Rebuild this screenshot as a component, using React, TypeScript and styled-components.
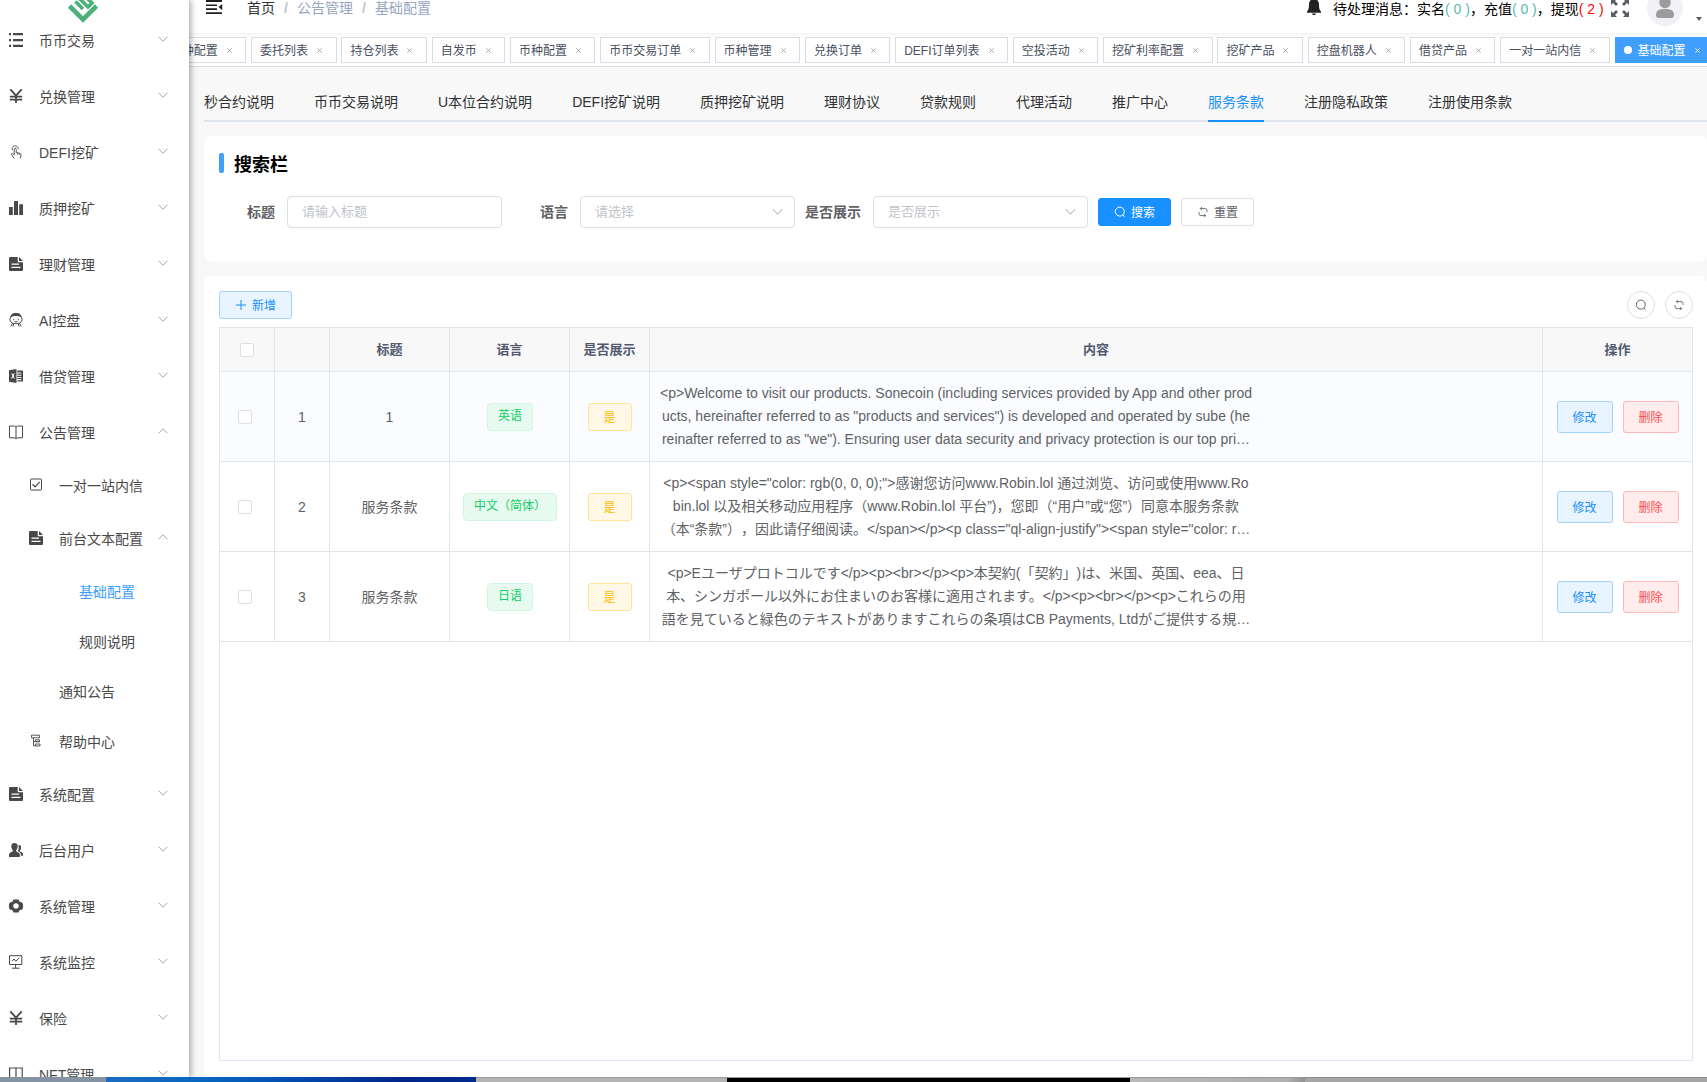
import React from "react";
import styled, { createGlobalStyle, css } from "styled-components";

const Global = createGlobalStyle`
  * { box-sizing: border-box; }
  html, body { margin: 0; padding: 0; }
  body {
    font-family: "Liberation Sans", "Noto Sans CJK SC", sans-serif;
    font-size: 14px;
    color: #303133;
    background: #fff;
    overflow: hidden;
  }
`;

const Screen = styled.div`
  width: 1707px;
  height: 1082px;
  display: flex;
  flex-direction: column;
  overflow: hidden;
`;
const Shell = styled.div`
  display: flex;
  height: 1077px;
  overflow: hidden;
`;

/* ---------- sidebar ---------- */
const Sidebar = styled.aside`
  position: relative;
  z-index: 5;
  flex: 0 0 189px;
  background: #fff;
  box-shadow: 2px 0 6px rgba(0, 21, 41, 0.35);
`;
const Brand = styled.div`
  height: 13px;
  padding-left: 67px;
  svg { display: block; overflow: visible; }
`;
const MenuRow = styled.div<{ $level: number; $leaf?: boolean; $active?: boolean }>`
  display: flex;
  align-items: center;
  height: ${(p) => (p.$leaf ? 50 : 56)}px;
  padding: 0 20px 0 ${(p) => 9 + p.$level * 20}px;
  color: ${(p) => (p.$active ? "#409eff" : "#484848")};
`;
const MenuIcon = styled.span`
  width: 14px;
  height: 14px;
  margin: 0 16px 2px 0;
  svg { display: block; }
`;
const MenuText = styled.span`
  flex: 1;
  margin-bottom: 2px;
  white-space: nowrap;
`;
const MenuArrow = styled.span<{ $open?: boolean }>`
  width: 12px;
  height: 12px;
  margin-bottom: 4px;
  svg { display: block; }
  ${(p) => p.$open && css`svg { transform: rotate(180deg); }`}
`;

/* ---------- top bar ---------- */
const Main = styled.main`
  flex: 1;
  min-width: 0;
  display: flex;
  flex-direction: column;
  background: #f8f8f8;
`;
const TopBar = styled.header`
  flex: 0 0 33px;
  position: relative;
  z-index: 2;
  display: flex;
  justify-content: space-between;
  background: #fff;
  box-shadow: 0 1px 4px rgba(0, 21, 41, 0.08);
`;
const TopLeft = styled.div`
  display: flex;
  align-items: flex-start;
  height: 16px;
  padding-left: 17px;
  line-height: 16px;
`;
const Crumbs = styled.nav`
  display: flex;
  gap: 9px;
  margin-left: 24px;
  color: #97a8be;
  white-space: nowrap;
`;
const CrumbHome = styled.span`color: #303133;`;
const Slash = styled.span`
  width: 4px;
  font-weight: 700;
  color: #c0c4cc;
`;
const TopRight = styled.div`
  display: flex;
  align-items: flex-start;
  height: 16px;
  color: #000;
  white-space: nowrap;
`;
const Notice = styled.div`
  width: 278px;
  margin-left: 12px;
  line-height: 18px;
`;
const Count = styled.span<{ $alert?: boolean }>`
  color: ${(p) => (p.$alert ? "#f00" : "#56bda9")};
`;
const Avatar = styled.div`
  width: 36px;
  height: 36px;
  margin: -10px 0 0 18px;
  border-radius: 50%;
  background: #f2f0f7;
  overflow: hidden;
`;
const Caret = styled.span`
  margin: 17px 5px 0 13px;
  border: 3.5px solid transparent;
  border-top: 4px solid #5a5e66;
  border-bottom: 0;
`;

/* ---------- visited tags ---------- */
const TagBar = styled.div`
  flex: 0 0 34px;
  display: flex;
  justify-content: flex-end;
  gap: 4.9px;
  padding-top: 4px;
  background: #fff;
  border-bottom: 1px solid #d8dce5;
  overflow: hidden;
`;
const VisitTag = styled.span<{ $active?: boolean }>`
  flex: none;
  display: flex;
  align-items: center;
  height: 26px;
  padding: 0 8px 1px;
  border: 1px solid ${(p) => (p.$active ? "#409eff" : "#d8dce5")};
  background: ${(p) => (p.$active ? "#409eff" : "#fff")};
  color: ${(p) => (p.$active ? "#fff" : "#495060")};
  font-size: 12px;
  white-space: nowrap;
  &:last-child { margin-right: -7px; }
`;
const ActiveDot = styled.i`
  width: 8px;
  height: 8px;
  margin: 1px 6px 0 0;
  border-radius: 50%;
  background: #fff;
`;
const CloseMark = styled.span<{ $active?: boolean }>`
  width: 19.4px;
  padding-left: 9px;
  svg { display: block; margin-top: 2px; }
  color: ${(p) => (p.$active ? "#fff" : "#9a9ea6")};
`;

/* ---------- section tabs ---------- */
const SectionTabs = styled.div`
  flex: none;
  height: 40px;
  display: flex;
  gap: 40px;
  margin: 15px 0 14px 15px;
  border-bottom: 2px solid #dfe4ed;
`;
const SectionTab = styled.span<{ $active?: boolean }>`
  height: 40px;
  line-height: 40px;
  margin-bottom: -2px;
  white-space: nowrap;
  color: ${(p) => (p.$active ? "#1890ff" : "#303133")};
  border-bottom: ${(p) => (p.$active ? "2px solid #1890ff" : "0")};
`;

/* ---------- cards ---------- */
const SearchCard = styled.section`
  flex: 0 0 125px;
  margin: 0 0 15px 15px;
  padding: 17px 15px;
  border-radius: 8px;
  background: #fff;
`;
const CardTitle = styled.h2`
  display: flex;
  align-items: center;
  height: 20px;
  margin: 0 0 23px;
  font-size: 18px;
  color: #000;
  &::before {
    content: "";
    width: 5px;
    height: 20px;
    margin-right: 10px;
    border-radius: 2px;
    background: #409eff;
  }
`;
const Form = styled.div`
  display: flex;
  align-items: center;
  gap: 10px;
`;
const Field = styled.label`
  display: flex;
  align-items: center;
`;
const FieldLabel = styled.span`
  width: 68px;
  padding: 0 12px 3px 0;
  text-align: right;
  font-weight: 700;
  color: #606266;
  white-space: nowrap;
`;
const FieldBox = styled.span`
  display: flex;
  align-items: center;
  justify-content: space-between;
  width: 215px;
  height: 32px;
  padding: 0 10px 4px 14px;
  border: 1px solid #dcdfe6;
  border-radius: 4px;
  font-size: 13px;
  color: #bfc3cb;
  svg { margin-top: 3px; }
`;
const tones = {
  solid: css`background: #1890ff; border-color: #1890ff; color: #fff;`,
  plain: css`background: #fff; border-color: #dcdfe6; color: #606266;`,
  primary: css`background: #e8f4ff; border-color: #a3d3ff; color: #1890ff;`,
  danger: css`background: #ffeded; border-color: #ffb6b6; color: #ff4949;`,
  warning: css`background: #fff8e6; border-color: #ffe399; color: #ffba00;`,
};
const Button = styled.button<{ $tone: keyof typeof tones; $w: number; $h?: number }>`
  flex: none;
  display: flex;
  align-items: center;
  justify-content: center;
  gap: 5px;
  width: ${(p) => p.$w}px;
  height: ${(p) => p.$h ?? 28}px;
  padding: 0 0 1px;
  border: 1px solid;
  border-radius: 3px;
  font-family: inherit;
  font-size: 12px;
  ${(p) => tones[p.$tone]}
`;
const RoundButton = styled.button`
  display: flex;
  align-items: center;
  justify-content: center;
  width: 28px;
  height: 28px;
  padding: 0;
  border: 1px solid #dcdfe6;
  border-radius: 50%;
  background: #fff;
  color: #606266;
`;

/* ---------- table ---------- */
const TableCard = styled.section`
  flex: 1;
  display: flex;
  flex-direction: column;
  margin-left: 15px;
  padding: 15px 14px 16px 15px;
  border-radius: 8px 8px 0 0;
  background: #fff;
`;
const Toolbar = styled.div`
  display: flex;
  justify-content: space-between;
  margin-bottom: 8px;
`;
const ToolGroup = styled.div`
  display: flex;
  gap: 10px;
`;
const Table = styled.div`
  flex: 1;
  border: 1px solid #dfe6ec;
  border-bottom-color: #e0e6f3;
`;
const Row = styled.div<{ $head?: boolean; $hover?: boolean }>`
  display: grid;
  grid-template-columns: 55px 55px 120px 120px 80px 893px 149px;
  height: ${(p) => (p.$head ? 44 : 90)}px;
  background: ${(p) => (p.$head ? "#f8f8f9" : p.$hover ? "#fafcff" : "#fff")};
  color: ${(p) => (p.$head ? "#515a6e" : "#606266")};
  font-size: ${(p) => (p.$head ? 13 : 14)}px;
  font-weight: ${(p) => (p.$head ? 700 : 400)};
`;
const Cell = styled.div<{ $left?: boolean }>`
  display: flex;
  align-items: center;
  justify-content: ${(p) => (p.$left ? "flex-start" : "center")};
  gap: 10px;
  min-width: 0;
  padding-left: ${(p) => (p.$left ? "6px" : "0")};
  border-right: 1px solid #dfe6ec;
  border-bottom: 1px solid #dfe6ec;
  white-space: nowrap;
  &:last-child { border-right: 0; }
`;
const CellText = styled.span`
  margin-bottom: 2px;
`;
const CheckBox = styled.i<{ $shift?: boolean }>`
  width: 14px;
  height: 14px;
  margin-right: ${(p) => (p.$shift ? "4px" : "0")};
  border: 1px solid #dcdfe6;
  border-radius: 2px;
  background: #fff;
`;
const LangTag = styled.span`
  height: 28px;
  margin: 1px 0 0 1px;
  padding: 0 10px;
  line-height: 25px;
  border: 1px solid #d0f5e0;
  border-radius: 4px;
  background: #e7faf0;
  color: #13ce66;
  font-size: 12px;
`;
const Excerpt = styled.div<{ $ja?: boolean }>`
  width: 600px;
  text-align: center;
  line-height: 23px;
  ${(p) => p.$ja && css`font-family: "Liberation Sans", "Noto Sans CJK JP", sans-serif;`}
`;
const ExcerptLine = styled.div<{ $wide?: boolean }>`
  text-spacing-trim: ${(p) => (p.$wide ? "space-all" : "normal")};
`;

/* ---------- desktop strip ---------- */
const Desktop = styled.footer`
  display: flex;
  height: 5px;
`;
const Strip = styled.i<{ $w: number; $bg: string; $line?: string }>`
  width: ${(p) => p.$w}px;
  background: ${(p) => p.$bg};
  border-top: ${(p) => (p.$line ? `1px solid ${p.$line}` : "0")};
`;

/* ---------- icons ---------- */
const Svg = ({ children, s = 14, box = 14 }: { children: React.ReactNode; s?: number; box?: number }) => (
  <svg width={s} height={s} viewBox={`0 0 ${box} ${box}`} fill="none" stroke="currentColor" strokeWidth="1">
    {children}
  </svg>
);
const F = { fill: "currentColor", stroke: "none" };
const icons: Record<string, React.ReactNode> = {
  list: <Svg><path {...F} d="M0 0h2v2.2H0zM4 0h10v2.2H4zM0 6h2v2.2H0zM4 6h10v2.2H4zM0 11.8h2V14H0zM4 11.8h10V14H4z" /></Svg>,
  yen: <Svg><path strokeWidth="1.8" d="M1.3.3 7 6.6 12.7.3M7 6.6V14M.8 7.6h12.4M.8 10.6h12.4" /></Svg>,
  touch: <Svg><path strokeWidth=".9" d="M3.4 5.2A3.1 3.1 0 1 1 9.3 4.2M5.2 9.8V4.2a1 1 0 0 1 2 0v3.2l3.7.9c1 .3 1.3.9 1.1 1.8L11.400 13.400M5.200 9.800 3.600 8.600c-.8-.5-1.600.3-1.100 1l2.800 3.900M8.700 8v1.500M10.400 8.400v1.500" /></Svg>,
  bars: <Svg><path {...F} d="M0 6h3.800v8H0zM5 0h4v14H5zM10.200 3.200H14V14h-3.800z" /></Svg>,
  doc: <Svg><path {...F} fillRule="evenodd" d="M1.500 0h7.200v4.300c0 .6.300.9.900.9H14v7.300c0 1-.5 1.500-1.500 1.500h-11C.5 14 0 13.500 0 12.500v-11C0 .5.500 0 1.500 0zM2.500 6.500v1.300h7.500V6.500zM2.500 9.800v1.300h9V9.800zM10 0l4 4h-4z" /></Svg>,
  face: <Svg><path {...F} d="M7 0C3.300 0 1.200 2 1 5.300l.8-.8C3 3.300 5 3 7 3s4 .3 5.200 1.500l.8.8C12.800 2 10.700 0 7 0z" /><path d="M1.700 4.200C.2 6 .4 10.700 7 10.700S13.800 6 12.300 4.200M3.500 10.200 1.800 13.500M10.500 10.200l1.700 3.300M4.500 11l-.4 2.500M9.500 11l.4 2.500M4 6.700h1.200M8.800 6.700H10M5.500 8.700h3" /></Svg>,
  sheet: <Svg><path {...F} fillRule="evenodd" d="M0 1.300 7.500 0v14L0 12.700zM2.200 4.600 3.400 7 2 9.500h1.100L4 7.900l.9 1.600H6L4.600 7l1.200-2.400H4.700L4 6l-.7-1.400zM8.300 1.500H14v11H8.300v-1.300h4V10h-4V9h4V7.900h-4V6.800h4V5.700h-4V4.600h4V3.400h-4z" /></Svg>,
  book: <Svg><path d="M.5 1h5L7 2l1.500-1h5v11.800h-5L7 13.600l-1.500-.8h-5zM7 2v11.500" /></Svg>,
  check: <Svg><rect x="1.500" y="1" width="11" height="11" rx="1" /><path strokeWidth="1.200" d="m3.500 6.300 2.600 2.500 4.600-5" /></Svg>,
  tree: <Svg><path d="M2.500 1.200h8M2.500 1.200v2.600h8V1.200M4.500 3.800v8h2M4.500 7.500h6M6.500 5.800h4v2h-4zM6.500 10h4.500v2H6.500z" strokeWidth=".9" /></Svg>,
  users: <Svg><path {...F} d="M5.500 0c2 0 3.200 1.200 3.200 3.300 0 1.800-.6 3-1.400 3.700v1.400c2.200.9 3.500 1.700 3.500 3.200V14H0v-2.400c0-1.500 1.500-2.400 3.700-3.200V7C2.900 6.300 2.300 5.100 2.300 3.300 2.300 1.200 3.500 0 5.500 0zM9.400 1.800c1.800 0 2.700 1 2.700 2.700 0 1.400-.5 2.300-1.200 3v1c1.800.7 3.100 1.300 3.100 2.700v1.500h-2.200v-1.100c0-1.600-1.200-2.700-3-3.500 1-1.400 1.300-4.200.6-6.300z" /></Svg>,
  gear: <Svg><path {...F} fillRule="evenodd" d="M4.500.6 9.500.6 10.700 3l2.300.2L14 5.500v3l-1 2.300-2.300.2-1.200 2.400h-5L3.300 11 1 10.800 0 8.500v-3l1-2.300L3.300 3zM7 4.300a2.700 2.700 0 1 0 0 5.400 2.700 2.700 0 0 0 0-5.400z" /></Svg>,
  monitor: <Svg><path d="M.5.700h12.300v8.800H.5zM6.600 9.500v3.500M3 13.200h7.500M3.200 6 5 4l1.800 2.200L10.200 3" /></Svg>,
  net: <Svg><path strokeWidth="1.200" d="M.6 1h12.600v12H.6zM7 1v12" /></Svg>,
};
const Chevron = ({ size = 12, color = "#a3a6ab" }) => (
  <svg width={size} height={size} viewBox="0 0 12 12" fill="none" stroke={color} strokeWidth="1">
    <path d="M1.500 3.700 6 8.200l4.500-4.500" />
  </svg>
);
const SearchIcon = () => (
  <Svg s={12} box={12}><circle cx="5.800" cy="5.600" r="4.500" /><path d="m8.800 9 1.900 1.800" /></Svg>
);
const RefreshIcon = () => (
  <Svg s={12} box={12}>
    <path d="M3.400 2.600H8a2 2 0 0 1 2 2V6M4.900 1 3.300 2.600l1.600 1.600M8.600 9.600H4a2 2 0 0 1-2-2V6M7.100 8l1.600 1.600-1.600 1.600" strokeWidth=".9" />
  </Svg>
);
const PlusIcon = () => <Svg s={12} box={12}><path d="M6 1v10M1 6h10" /></Svg>;

/* ---------- data ---------- */
type Item = { t: string; i?: string; level?: number; leaf?: boolean; open?: boolean; active?: boolean };
const menu: Item[] = [
  { t: "币币交易", i: "list" },
  { t: "兑换管理", i: "yen" },
  { t: "DEFI挖矿", i: "touch" },
  { t: "质押挖矿", i: "bars" },
  { t: "理财管理", i: "doc" },
  { t: "AI控盘", i: "face" },
  { t: "借贷管理", i: "sheet" },
  { t: "公告管理", i: "book", open: true },
  { t: "一对一站内信", i: "check", level: 1, leaf: true },
  { t: "前台文本配置", i: "doc", level: 1, open: true },
  { t: "基础配置", level: 2, leaf: true, active: true },
  { t: "规则说明", level: 2, leaf: true },
  { t: "通知公告", level: 1, leaf: true },
  { t: "帮助中心", i: "tree", level: 1, leaf: true },
  { t: "系统配置", i: "doc" },
  { t: "后台用户", i: "users" },
  { t: "系统管理", i: "gear" },
  { t: "系统监控", i: "monitor" },
  { t: "保险", i: "yen" },
  { t: "NFT管理", i: "net" },
];
const visited = [
  "币种配置", "委托列表", "持仓列表", "自发币", "币种配置", "币币交易订单", "币种管理", "兑换订单",
  "DEFI订单列表", "空投活动", "挖矿利率配置", "挖矿产品", "控盘机器人", "借贷产品", "一对一站内信", "基础配置",
];
const sections = [
  "秒合约说明", "币币交易说明", "U本位合约说明", "DEFI挖矿说明", "质押挖矿说明", "理财协议",
  "贷款规则", "代理活动", "推广中心", "服务条款", "注册隐私政策", "注册使用条款",
];
const rows: { title: string; lang: string; ja?: boolean; wide?: number; lines: string[] }[] = [
  {
    title: "1", lang: "英语",
    lines: [
      "<p>Welcome to visit our products. Sonecoin (including services provided by App and other prod",
      "ucts, hereinafter referred to as \"products and services\") is developed and operated by sube (he",
      "reinafter referred to as \"we\"). Ensuring user data security and privacy protection is our top pri…",
    ],
  },
  {
    title: "服务条款", lang: "中文（简体）", wide: 2,
    lines: [
      "<p><span style=\"color: rgb(0, 0, 0);\">感谢您访问www.Robin.lol 通过浏览、访问或使用www.Ro",
      "bin.lol 以及相关移动应用程序（www.Robin.lol 平台”)，您即（“用户”或“您”）同意本服务条款",
      "（本“条款”），因此请仔细阅读。</span></p><p class=\"ql-align-justify\"><span style=\"color: r…",
    ],
  },
  {
    title: "服务条款", lang: "日语", ja: true, wide: 0,
    lines: [
      "<p>Eユーザプロトコルです</p><p><br></p><p>本契約(「契約」)は、米国、英国、eea、日",
      "本、シンガポール以外にお住まいのお客様に適用されます。</p><p><br></p><p>これらの用",
      "語を見ていると緑色のテキストがありますこれらの条項はCB Payments, Ltdがご提供する規…",
    ],
  },
];

export default function App() {
  return (
    <Screen>
      <Global />
      <Shell>
        <Sidebar>
          <Brand>
            <svg width="32" height="24" viewBox="0 0 32 24" fill="none" stroke="#4caf7c" strokeWidth="4.600">
              <path d="M2.500 6 16 19.500 29.500 6" />
              <path d="M8.500 1.500 16 9M12-2 22 8M20-2l5 5-5 5" strokeWidth="3.600" />
            </svg>
          </Brand>
          {menu.map((m, k) => (
            <MenuRow key={k} $level={m.level ?? 0} $leaf={m.leaf} $active={m.active}>
              <MenuIcon>{m.i && icons[m.i]}</MenuIcon>
              <MenuText>{m.t}</MenuText>
              {!m.leaf && <MenuArrow $open={m.open}><Chevron /></MenuArrow>}
            </MenuRow>
          ))}
        </Sidebar>

        <Main>
          <TopBar>
            <TopLeft>
              <svg width="17" height="15" viewBox="0 0 17 15" fill="#1f1f1f">
                <path d="M0 0h16v2H0zM0 4.400h11v1.600H0zM0 8.300h11v1.600H0zM0 12.200h16v1.900H0zM16.200 4v6.200L12.600 7.100z" />
              </svg>
              <Crumbs>
                <CrumbHome>首页</CrumbHome><Slash>/</Slash><span>公告管理</span><Slash>/</Slash><span>基础配置</span>
              </Crumbs>
            </TopLeft>
            <TopRight>
              <svg width="14" height="16" viewBox="0 0 14 16" fill="#222">
                <path d="M7-1c3.200 0 5 2.300 5 5.500 0 4 .5 5.500 2 7v1.300H0v-1.300c1.500-1.500 2-3 2-7C2 1.300 3.800-1 7-1zM5 13.600h4C8.800 14.700 8 15.300 7 15.300s-1.800-.6-2-1.700z" />
              </svg>
              <Notice>
                待处理消息：实名<Count>( 0 )</Count>，充值<Count>( 0 )</Count>，提现<Count $alert>( 2 )</Count>
              </Notice>
              <svg width="18" height="18" viewBox="0 0 18 18" fill="#5a5e66">
                <path d="M0-1h6L4 1l3 3-2 2-3-3-2 2zM18-1v6l-2-2-3 3-2-2 3-3-2-2zM0 17v-6l2 2 3-3 2 2-3 3 2 2zM18 17h-6l2-2-3-3 2-2 3 3 2-2z" />
              </svg>
              <Avatar>
                <svg width="36" height="36" viewBox="0 0 36 36" fill="#9c9c9c">
                  <circle cx="18" cy="12.500" r="5.700" />
                  <path d="M9 25c0-4.500 3-6 9-6s9 1.500 9 6c0 2-1 3-2.500 3h-13C10 28 9 27 9 25z" />
                </svg>
              </Avatar>
              <Caret />
            </TopRight>
          </TopBar>

          <TagBar>
            {visited.map((v, k) => {
              const on = k === visited.length - 1;
              return (
                <VisitTag key={k} $active={on}>
                  {on && <ActiveDot />}
                  {v}
                  <CloseMark $active={on}>
                    <svg width="5" height="5" viewBox="0 0 5 5" stroke="currentColor" strokeWidth=".9"><path d="m.4.400 4.200 4.200M4.600.400.400 4.600" /></svg>
                  </CloseMark>
                </VisitTag>
              );
            })}
          </TagBar>

          <SectionTabs>
            {sections.map((s) => <SectionTab key={s} $active={s === "服务条款"}>{s}</SectionTab>)}
          </SectionTabs>

          <SearchCard>
            <CardTitle>搜索栏</CardTitle>
            <Form>
              <Field><FieldLabel>标题</FieldLabel><FieldBox>请输入标题</FieldBox></Field>
              <Field><FieldLabel>语言</FieldLabel><FieldBox>请选择<Chevron size={13} color="#c0c4cc" /></FieldBox></Field>
              <Field><FieldLabel>是否展示</FieldLabel><FieldBox>是否展示<Chevron size={13} color="#c0c4cc" /></FieldBox></Field>
              <Button $tone="solid" $w={73}><SearchIcon />搜索</Button>
              <Button $tone="plain" $w={73}><RefreshIcon />重置</Button>
            </Form>
          </SearchCard>

          <TableCard>
            <Toolbar>
              <Button $tone="primary" $w={73}><PlusIcon />新增</Button>
              <ToolGroup>
                <RoundButton><SearchIcon /></RoundButton>
                <RoundButton><RefreshIcon /></RoundButton>
              </ToolGroup>
            </Toolbar>
            <Table>
              <Row $head>
                <Cell><CheckBox /></Cell>
                <Cell />
                <Cell><CellText>标题</CellText></Cell>
                <Cell><CellText>语言</CellText></Cell>
                <Cell><CellText>是否展示</CellText></Cell>
                <Cell><CellText>内容</CellText></Cell>
                <Cell><CellText>操作</CellText></Cell>
              </Row>
              {rows.map((r, k) => (
                <Row key={k} $hover={k === 0}>
                  <Cell><CheckBox $shift /></Cell>
                  <Cell>{k + 1}</Cell>
                  <Cell>{r.title === "1" ? r.title : <CellText>{r.title}</CellText>}</Cell>
                  <Cell><LangTag>{r.lang}</LangTag></Cell>
                  <Cell><Button $tone="warning" $w={44}>是</Button></Cell>
                  <Cell $left>
                    <Excerpt $ja={r.ja}>
                      {r.lines.map((l, n) => <ExcerptLine key={l} $wide={n === r.wide}>{l}</ExcerptLine>)}
                    </Excerpt>
                  </Cell>
                  <Cell>
                    <Button $tone="primary" $w={56} $h={32}>修改</Button>
                    <Button $tone="danger" $w={56} $h={32}>删除</Button>
                  </Cell>
                </Row>
              ))}
            </Table>
          </TableCard>
        </Main>
      </Shell>
      <Desktop>
        <Strip $w={106} $bg="#8593a4" />
        <Strip $w={370} $bg="linear-gradient(90deg, #1c6cc0, #0667c0 25%, #0353b5 45%, #00258a 80%, #002a8c)" />
        <Strip $w={251} $bg="#b4b4b4" $line="#999" />
        <Strip $w={403} $bg="#000" $line="#999" />
        <Strip $w={175} $bg="linear-gradient(90deg, #b9b9b9, #b0b0b0 90%, #909090)" $line="#999" />
        <Strip $w={402} $bg="#a6a6a6" $line="#8c8c8c" />
      </Desktop>
    </Screen>
  );
}
